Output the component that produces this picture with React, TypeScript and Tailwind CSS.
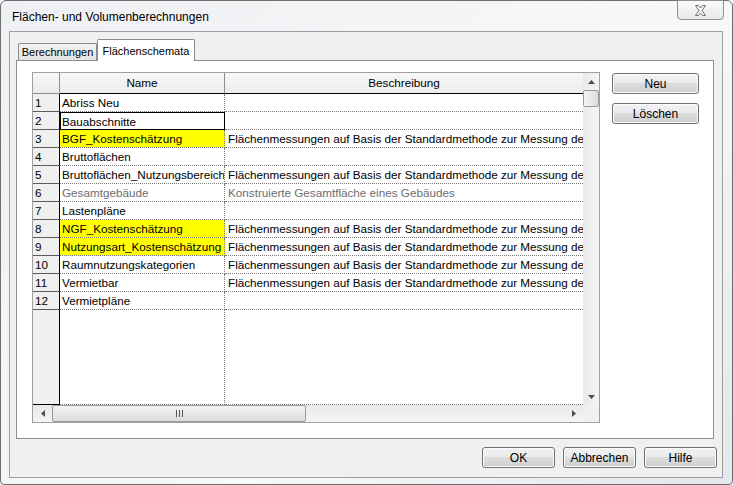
import React from 'react';

type Row = { n: number; name: string; desc: string; yellow?: boolean; gray?: boolean; focus?: boolean };

const DESC = 'Flächenmessungen auf Basis der Standardmethode zur Messung der Flächen';

const rows: Row[] = [
    { n: 1, name: 'Abriss Neu', desc: '' },
    { n: 2, name: 'Bauabschnitte', desc: '', focus: true },
    { n: 3, name: 'BGF_Kostenschätzung', desc: DESC, yellow: true },
    { n: 4, name: 'Bruttoflächen', desc: '' },
    { n: 5, name: 'Bruttoflächen_Nutzungsbereiche', desc: DESC },
    { n: 6, name: 'Gesamtgebäude', desc: 'Konstruierte Gesamtfläche eines Gebäudes', gray: true },
    { n: 7, name: 'Lastenpläne', desc: '' },
    { n: 8, name: 'NGF_Kostenschätzung', desc: DESC, yellow: true },
    { n: 9, name: 'Nutzungsart_Kostenschätzung', desc: DESC, yellow: true },
    { n: 10, name: 'Raumnutzungskategorien', desc: DESC },
    { n: 11, name: 'Vermietbar', desc: DESC },
    { n: 12, name: 'Vermietpläne', desc: '' },
];

const WinButton: React.FC<{ label: string; className?: string }> = ({ label, className }) => (
    <button
        type="button"
        className={`h-[21px] rounded-[3px] border border-[#707070] bg-[linear-gradient(to_bottom,#f2f2f2_0%,#ebebeb_45%,#dddddd_50%,#cfcfcf_100%)] text-[12px] leading-none text-black shadow-[inset_0_0_0_1px_#fcfcfc] ${className ?? ''}`}
    >
        {label}
    </button>
);

const App: React.FC = () => {
    return (
        <div className="w-[733px] h-[485px] overflow-hidden bg-white font-['Liberation_Sans',Arial,sans-serif] text-[12px] text-black">
            <div className="w-full h-full flex flex-col rounded-t-[6px] rounded-b-[4px] border border-[#6e6e6e] bg-[linear-gradient(135deg,#eef0f3_0%,#f7f8f9_60%,#e4e7eb_100%)]">
                {/* title bar */}
                <div className="h-[30px] shrink-0 flex items-start">
                    <div className="pl-[11px] pt-[9px] text-[12px] leading-[14px] text-black">Flächen- und Volumenberechnungen</div>
                    <div className="ml-auto mr-[8px] w-[47px] h-[20px] -mt-px rounded-b-[4px] border border-[#8d9095] bg-[linear-gradient(to_bottom,#fafafa,#e6e8ea)] flex items-center justify-center">
                        <svg width="13" height="11" viewBox="0 0 13 11" fill="#fdfdfd" stroke="#6f6f6f" strokeWidth="1">
                            <path d="M1.5 0.5 H4.5 L6.5 3 L8.5 0.5 H11.5 L8 5.5 L11.5 10.5 H8.5 L6.5 8 L4.5 10.5 H1.5 L5 5.5 Z" />
                        </svg>
                    </div>
                </div>

                {/* client area */}
                <div className="ml-[8px] mr-[9px] mb-[6px] flex-1 flex flex-col border border-[#9c9fa3] bg-[#f0f0f0]">
                    {/* tabs */}
                    <div className="h-[28px] shrink-0 flex items-end pl-[8px] text-[11px]">
                        <div className="h-[17px] w-[79px] flex items-center justify-center border border-b-0 border-[#898c95] rounded-t-[2px] bg-[linear-gradient(to_bottom,#f3f3f3,#e3e3e3)]">
                            Berechnungen
                        </div>
                        <div className="relative z-10 -mb-px h-[22px] w-[98px] flex items-start justify-center pt-[3px] border border-b-0 border-[#898c95] rounded-t-[2px] bg-white">
                            Flächenschemata
                        </div>
                    </div>

                    {/* tab panel */}
                    <div className="ml-[6px] mr-[8px] h-[379px] shrink-0 border border-[#898c95] bg-white flex items-start pt-[11px] pl-[15px]">
                        {/* grid */}
                        <div className="w-[568px] h-[351px] flex flex-col border border-[#a0a0a0] bg-white text-[11.7px]">
                            <div className="flex flex-1 min-h-0">
                                <div className="flex-1 flex flex-col overflow-hidden">
                                    {/* header */}
                                    <div className="h-[21px] shrink-0 flex bg-[linear-gradient(to_bottom,#f7f7f7,#ececec)]">
                                        <div className="w-[27px] shrink-0 border-r border-b border-[#8e8e8e]" />
                                        <div className="w-[165px] shrink-0 flex items-center justify-center border-r border-[#8e8e8e] border-b border-b-black">Name</div>
                                        <div className="flex-1 flex items-center justify-center border-b border-black">Beschreibung</div>
                                    </div>
                                    {/* rows */}
                                    {rows.map(r => (
                                        <div key={r.n} className="h-[18px] shrink-0 flex">
                                            <div className="w-[27px] shrink-0 bg-[#f0f0f0] border-r border-r-black border-b border-b-[#5c5c5c] pl-[2px] leading-[17px]">{r.n}</div>
                                            <div
                                                className={`w-[165px] shrink-0 overflow-hidden whitespace-nowrap leading-[17px] ${r.focus ? 'border border-black pl-[1px] leading-[15px]' : 'border-r border-b border-dotted border-[#7a7a7a] pl-[2px]'} ${r.yellow ? 'bg-[#ffff00]' : ''} ${r.gray ? 'text-[#6d6d6d]' : ''}`}
                                            >
                                                {r.name}
                                            </div>
                                            <div className={`flex-1 overflow-hidden whitespace-nowrap border-b border-dotted border-[#7a7a7a] pl-[3px] leading-[17px] ${r.gray ? 'text-[#6d6d6d]' : ''}`}>
                                                {r.desc}
                                            </div>
                                        </div>
                                    ))}
                                    {/* filler */}
                                    <div className="flex-1 flex">
                                        <div className="w-[27px] shrink-0 bg-[#f0f0f0] border-r border-b border-black" />
                                        <div className="w-[165px] shrink-0 border-r border-b border-dotted border-[#7a7a7a]" />
                                        <div className="flex-1 border-b border-dotted border-[#7a7a7a]" />
                                    </div>
                                </div>
                                {/* vertical scrollbar */}
                                <div className="w-[16px] shrink-0 flex flex-col bg-[linear-gradient(to_right,#e9e9e9,#f5f5f5)]">
                                    <div className="h-[17px] flex items-center justify-center">
                                        <svg width="7" height="4" viewBox="0 0 7 4"><path d="M0 4 L3.5 0 L7 4 Z" fill="#4d4d4d" /></svg>
                                    </div>
                                    <div className="h-[17px] rounded-[2px] border border-[#9b9b9b] bg-[linear-gradient(to_right,#f4f4f4,#dcdcdc)]" />
                                    <div className="flex-1" />
                                    <div className="h-[17px] flex items-center justify-center">
                                        <svg width="7" height="4" viewBox="0 0 7 4"><path d="M0 0 L7 0 L3.5 4 Z" fill="#4d4d4d" /></svg>
                                    </div>
                                </div>
                            </div>
                            {/* horizontal scrollbar */}
                            <div className="h-[17px] shrink-0 flex bg-[linear-gradient(to_bottom,#e9e9e9,#f5f5f5)]">
                                <div className="w-[19px] shrink-0 flex items-center justify-center">
                                    <svg width="4" height="7" viewBox="0 0 4 7"><path d="M4 0 L0 3.5 L4 7 Z" fill="#4d4d4d" /></svg>
                                </div>
                                <div className="w-[254px] shrink-0 rounded-[2px] border border-[#9b9b9b] bg-[linear-gradient(to_bottom,#f4f4f4,#dcdcdc)] flex items-center justify-center">
                                    <svg width="7" height="7" viewBox="0 0 7 7">
                                        <path d="M0.5 0 V7 M3.5 0 V7 M6.5 0 V7" stroke="#555" strokeWidth="1" />
                                    </svg>
                                </div>
                                <div className="flex-1" />
                                <div className="w-[19px] shrink-0 flex items-center justify-center">
                                    <svg width="4" height="7" viewBox="0 0 4 7"><path d="M0 0 L4 3.5 L0 7 Z" fill="#4d4d4d" /></svg>
                                </div>
                                <div className="w-[16px] shrink-0 bg-[#f0f0f0]" />
                            </div>
                        </div>
                        {/* side buttons */}
                        <div className="ml-[12px] flex flex-col gap-[9px] pt-px">
                            <WinButton label="Neu" className="w-[87px]" />
                            <WinButton label="Löschen" className="w-[87px]" />
                        </div>
                    </div>

                    {/* bottom buttons */}
                    <div className="flex-1 flex items-start justify-end gap-[8px] pt-[8px] pr-[5px]">
                        <WinButton label="OK" className="w-[73px]" />
                        <WinButton label="Abbrechen" className="w-[73px]" />
                        <WinButton label="Hilfe" className="w-[73px]" />
                    </div>
                </div>
            </div>
        </div>
    );
};

export default App;
